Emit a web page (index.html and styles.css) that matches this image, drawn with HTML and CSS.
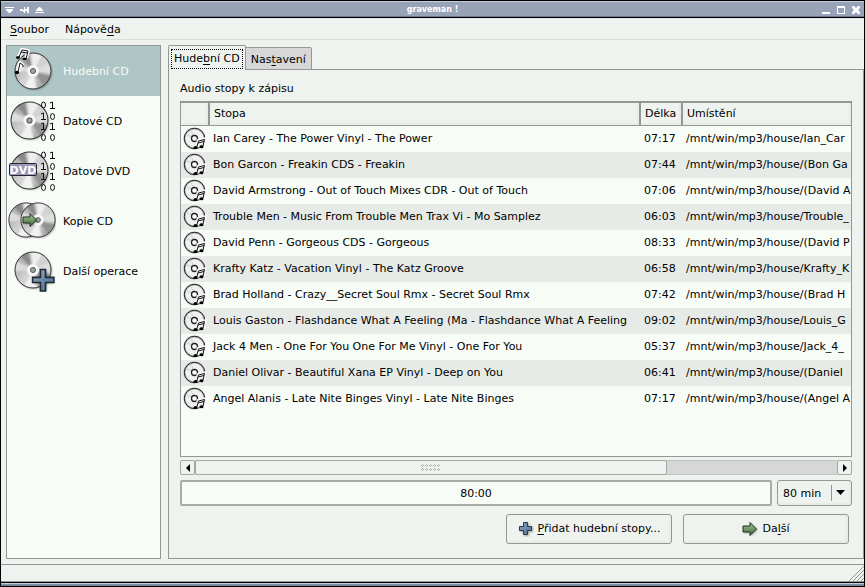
FILE: index.html
```html
<!DOCTYPE html>
<html lang="cs">
<head>
<meta charset="utf-8">
<title>graveman !</title>
<link rel="stylesheet" href="styles.css">
</head>
<body>
<svg class="defs" aria-hidden="true">
  <defs>
    <linearGradient id="silver" x1="0" y1="0" x2="1" y2="1">
      <stop offset="0" stop-color="#a9a9a9"/><stop offset=".3" stop-color="#b8b8b8"/><stop offset=".5" stop-color="#d4d4d4"/><stop offset=".75" stop-color="#b4b4b4"/><stop offset="1" stop-color="#8e8e8e"/>
    </linearGradient>
    <linearGradient id="blue" x1="0" y1="0" x2="1" y2="1"><stop offset="0" stop-color="#8aa6c2"/><stop offset="1" stop-color="#4c6b8c"/></linearGradient>
    <linearGradient id="green" x1="0" y1="0" x2="0" y2="1"><stop offset="0" stop-color="#a3c498"/><stop offset="1" stop-color="#3f6b3a"/></linearGradient>
    <filter id="soft"><feGaussianBlur stdDeviation="1"/></filter>
    <clipPath id="disc-clip"><circle cx="20" cy="20" r="18"/></clipPath>
    <symbol id="disc" viewBox="0 0 40 40">
      <circle cx="21" cy="21" r="18" fill="#000" opacity=".3" filter="url(#soft)"/>
      <circle cx="20" cy="20" r="18" fill="url(#silver)"/>
      <g clip-path="url(#disc-clip)" filter="url(#soft)">
        <path d="M20 20L-2 8V22Z" fill="#ddd"/>
        <path d="M20 20L2 0L14 -2Z" fill="#898989"/>
        <path d="M20 20L17 -2H33Z" fill="#eee"/>
        <path d="M20 20L42 8V24Z" fill="#dedede"/>
        <path d="M20 20L42 26L34 40Z" fill="#929292"/>
        <path d="M20 20L7 42H25Z" fill="#f1f1f1"/>
      </g>
      <circle cx="20" cy="20" r="18" fill="none" stroke="#333" stroke-width="1"/>
      <circle cx="20" cy="20" r="6" fill="#f7f7f7"/>
      <circle cx="20" cy="20" r="2.500" fill="#9ea6a4" stroke="#555"/>
    </symbol>
    <symbol id="bits" viewBox="0 0 16 42">
      <g fill="none" stroke="#111">
        <ellipse cx="3.500" cy="5" rx="2" ry="3"/><path d="M10 3L12.500 2V8.500M10 8.500H15"/>
        <path d="M1 14L3.500 13V19.500M1 19.500H6"/><ellipse cx="12.500" cy="16.500" rx="2" ry="3"/>
        <path d="M1 24L3.500 23V29.500M1 29.500H6M10 24L12.500 23V29.500M10 29.500H15"/>
        <ellipse cx="3.500" cy="37.500" rx="2" ry="3"/><ellipse cx="12.500" cy="37.500" rx="2" ry="3"/>
      </g>
    </symbol>
    <symbol id="plus" viewBox="0 0 24 24">
      <path d="M10 3H15V10H22V15H15V22H10V15H3V10H10Z" fill="#000" opacity=".35" filter="url(#soft)"/>
      <path d="M9 1.500H14V9H22V14H14V22H9V14H1.500V9H9Z" fill="url(#blue)" stroke="#202a35" stroke-width="1.500"/>
    </symbol>
    <symbol id="plus-small" viewBox="0 0 16 16">
      <path d="M6 2H11V6H15V11H11V15H6V11H2V6H6Z" fill="#000" opacity=".35" filter="url(#soft)"/>
      <path d="M5.500 1.500H9.500V5.500H13.500V9.500H9.500V13.500H5.500V9.500H1.500V5.500H5.500Z" fill="url(#blue)" stroke="#2c3a4a" stroke-linejoin="round"/>
    </symbol>
    <symbol id="arrow" viewBox="0 0 16 16">
      <path d="M2 6H9V3L16 9L9 15V12H2Z" fill="#000" opacity=".3" filter="url(#soft)"/>
      <path d="M1 5H8V1.500L14.500 8L8 14.500V11H1Z" fill="url(#green)" stroke="#1e301d"/>
    </symbol>
    <symbol id="track" viewBox="0 0 24 24">
      <circle cx="11.500" cy="11.500" r="10" fill="#f0f1f0" stroke="#bbb" stroke-width="2"/>
      <path d="M4 8L10 10M8 4L11 9M14 13L19 16" stroke="#dcdcdc" stroke-width="2"/>
      <circle cx="11.500" cy="11.500" r="10.200" fill="none" stroke="#222"/>
      <circle cx="11.500" cy="11.500" r="3" fill="#fff" stroke="#222" stroke-width="1.300"/>
      <path d="M14 20L15.500 14L21.500 12.500L20 19" fill="none" stroke="#f4f6f4" stroke-width="4"/>
      <path d="M13.800 20L15.500 14L21.500 12.500L20 19M15 16L21 14.500" fill="none" stroke="#111"/>
      <ellipse cx="12.500" cy="20.400" rx="1.900" ry="1.500"/><ellipse cx="18.600" cy="19.800" rx="1.900" ry="1.500"/>
    </symbol>
  </defs>
</svg>
<div class="window">
  <header class="titlebar">
    <div class="title-buttons">
      <button aria-label="Nabídka okna"><svg width="9" height="8"><path d="M0 1H9V2H0ZM1 3H8V4L5 7H4L1 4Z"/></svg></button>
      <button aria-label="Připnout"><svg width="9" height="8"><path d="M0 3H3V4H4V1H5V3H7V1H9V7H7V5H5V7H4V6H3V5H0Z"/></svg></button>
      <button aria-label="Srolovat"><svg width="9" height="8"><path d="M0 6H9V7H0ZM1 5V4L4 1H5L8 4V5Z"/></svg></button>
    </div>
    <h1>graveman !</h1>
    <div class="title-buttons right">
      <button aria-label="Minimalizovat"><svg width="8" height="8"><path d="M0 6H8V8H0Z"/></svg></button>
      <button aria-label="Maximalizovat"><svg width="8" height="8"><path fill-rule="evenodd" d="M0 0H8V8H0ZM1 2V7H7V2Z"/></svg></button>
      <button aria-label="Zavřít"><svg width="8" height="8"><path d="M0 0H2L4 2L6 0H8V2L6 4L8 6V8H6L4 6L2 8H0V6L2 4L0 2Z"/></svg></button>
    </div>
  </header>
  <nav class="menubar"><button><u>S</u>oubor</button><button>Nápově<u>d</u>a</button></nav>
  <main class="body">
    <nav class="sidebar">
      <button class="task selected">
        <svg width="48" height="48"><use href="#disc" x="5" y="4" width="40" height="40"/>
          <g fill="none" stroke="#fff" stroke-width="4" stroke-linejoin="round"><path d="M11 10L14 3L20 4L18 11M10 25L12 16L15 19"/><path d="M9 10H12M15 12H18M8 25H11"/></g>
          <g fill="none" stroke="#111"><path d="M11 10L14 3L20 4L18 12M13 5L19.500 6M10 25L12 16L15 18V20"/></g>
          <ellipse cx="10" cy="10.500" rx="2" ry="1.500"/><ellipse cx="16.500" cy="12" rx="2" ry="1.500"/><ellipse cx="9" cy="25.500" rx="2.200" ry="1.700"/>
        </svg><span>Hudební CD</span></button>
      <button class="task"><svg width="48" height="48"><use href="#disc" x="1" y="3" width="41" height="41"/><use href="#bits" x="32" y="3" width="16" height="42"/></svg><span>Datové CD</span></button>
      <button class="task"><svg width="48" height="48"><use href="#disc" x="1" y="3" width="41" height="41"/><use href="#bits" x="32" y="3" width="16" height="42"/><rect x="1.500" y="16.500" width="27" height="12" rx="1" fill="#9c98b8" stroke="#223"/><text class="disc-label" x="15" y="27" text-anchor="middle">DVD</text></svg><span>Datové DVD</span></button>
      <button class="task"><svg width="48" height="48"><use href="#disc" x="-1" y="4" width="38" height="38"/><use href="#disc" x="11" y="4" width="38" height="38"/><use href="#arrow" x="14" y="15" width="16" height="16"/></svg><span>Kopie CD</span></button>
      <button class="task"><svg width="48" height="48"><use href="#disc" x="5" y="3" width="40" height="40"/><use href="#plus" x="23" y="21" width="25" height="25"/></svg><span>Další operace</span></button>
    </nav>
    <section class="notebook">
      <div class="tabs" role="tablist">
        <button class="tab active" role="tab" aria-selected="true"><span>Hude<u>b</u>ní CD</span></button>
        <button class="tab" role="tab" aria-selected="false"><span>Nas<u>t</u>avení</span></button>
      </div>
      <div class="page" role="tabpanel">
        <h2>Audio stopy k zápisu</h2>
        <div class="list">
          <table>
            <colgroup><col class="c-icon"><col class="c-name"><col class="c-time"><col></colgroup>
            <thead><tr><th></th><th>Stopa</th><th>Délka</th><th>Umístění</th></tr></thead>
            <tbody>
              <tr><td><svg width="24" height="24"><use href="#track"/></svg></td><td>Ian Carey - The Power Vinyl - The Power</td><td>07:17</td><td>/mnt/win/mp3/house/Ian_Car</td></tr>
              <tr><td><svg width="24" height="24"><use href="#track"/></svg></td><td>Bon Garcon - Freakin CDS - Freakin</td><td>07:44</td><td>/mnt/win/mp3/house/(Bon Ga</td></tr>
              <tr><td><svg width="24" height="24"><use href="#track"/></svg></td><td>David Armstrong - Out of Touch Mixes CDR - Out of Touch</td><td>07:06</td><td>/mnt/win/mp3/house/(David A</td></tr>
              <tr><td><svg width="24" height="24"><use href="#track"/></svg></td><td>Trouble Men - Music From Trouble Men Trax Vi - Mo Samplez</td><td>06:03</td><td>/mnt/win/mp3/house/Trouble_</td></tr>
              <tr><td><svg width="24" height="24"><use href="#track"/></svg></td><td>David Penn - Gorgeous CDS - Gorgeous</td><td>08:33</td><td>/mnt/win/mp3/house/(David P</td></tr>
              <tr><td><svg width="24" height="24"><use href="#track"/></svg></td><td>Krafty Katz - Vacation Vinyl - The Katz Groove</td><td>06:58</td><td>/mnt/win/mp3/house/Krafty_K</td></tr>
              <tr><td><svg width="24" height="24"><use href="#track"/></svg></td><td>Brad Holland - Crazy__Secret Soul Rmx - Secret Soul Rmx</td><td>07:42</td><td>/mnt/win/mp3/house/(Brad H</td></tr>
              <tr><td><svg width="24" height="24"><use href="#track"/></svg></td><td>Louis Gaston - Flashdance What A Feeling (Ma - Flashdance What A Feeling</td><td>09:02</td><td>/mnt/win/mp3/house/Louis_G</td></tr>
              <tr><td><svg width="24" height="24"><use href="#track"/></svg></td><td>Jack 4 Men - One For You One For Me Vinyl - One For You</td><td>05:37</td><td>/mnt/win/mp3/house/Jack_4_</td></tr>
              <tr><td><svg width="24" height="24"><use href="#track"/></svg></td><td>Daniel Olivar - Beautiful Xana EP Vinyl - Deep on You</td><td>06:41</td><td>/mnt/win/mp3/house/(Daniel</td></tr>
              <tr><td><svg width="24" height="24"><use href="#track"/></svg></td><td>Angel Alanis - Late Nite Binges Vinyl - Late Nite Binges</td><td>07:17</td><td>/mnt/win/mp3/house/(Angel A</td></tr>
            </tbody>
          </table>
        </div>
        <div class="scrollbar">
          <button class="step" aria-label="Doleva"><svg width="4" height="8"><path d="M4 0V8L0 4Z"/></svg></button>
          <div class="trough"><div class="thumb"><svg width="19" height="7"><path d="M0 1.500H19M0 5.500H19" stroke="#a5aaa5" stroke-dasharray="1 1 1 1"/><path d="M1 0.500H19M1 2.500H19M1 4.500H19M1 6.500H19" stroke="#b9beb9" stroke-dasharray="1 3"/></svg></div></div>
          <button class="step" aria-label="Doprava"><svg width="4" height="8"><path d="M0 0V8L4 4Z"/></svg></button>
        </div>
        <div class="capacity">
          <div class="meter" role="progressbar" aria-label="Délka" aria-valuenow="0">80:00</div>
          <div class="combo"><select aria-label="Kapacita disku"><option>80 min</option></select><svg width="9" height="5" aria-hidden="true"><path d="M0 0H9L4.500 5Z"/></svg></div>
        </div>
        <div class="actions">
          <button class="action"><svg width="16" height="16"><use href="#plus-small"/></svg><span><u>P</u>řidat hudební stopy...</span></button>
          <button class="action"><svg width="16" height="16"><use href="#arrow"/></svg><span>Da<u>l</u>ší</span></button>
        </div>
      </div>
    </section>
  </main>
  <footer class="status"><svg width="15" height="15"><path d="M0 15L15 0M4 15L15 4M8 15L15 8M12 15L15 12" stroke="#929792"/></svg></footer>
  <div class="frame-bottom"></div>
</div>
</body>
</html>
```
FILE: styles.css
```css
* { box-sizing: border-box; }
body { margin: 0; background: #000; }
body, button, select { font: 11px/14px "DejaVu Sans", sans-serif; color: #000; }
button { margin: 0; padding: 0; border: 0; background: none; }
svg { display: block; flex: none; }
h1, h2 { margin: 0; font-size: inherit; }
u { text-decoration: underline; text-underline-offset: 2px; }
.defs { position: absolute; width: 0; height: 0; }

.window { display: flex; flex-direction: column; height: 100vh; border: 1px solid #000; border-bottom: 0; background: #eff3ef; }

.titlebar { display: flex; align-items: center; height: 17px; background: #98a3b8; border-top: 1px solid #c5ccda; border-bottom: 1px solid #000; box-shadow: inset 0 -1px #6c7892; color: #fff; }
.titlebar h1 { flex: 1; text-align: center; font: bold 8px/14px "DejaVu Sans", sans-serif; }
.title-buttons { display: flex; gap: 6px; width: 44px; padding-left: 4px; fill: #fff; }
.title-buttons.right { gap: 7px; justify-content: flex-end; padding: 0 4px 0 0; }

.menubar { display: flex; gap: 16px; height: 22px; padding: 2px 9px 0; border-top: 1px solid #dfe3df; border-bottom: 1px solid #dbdfdb; }

.body { display: flex; flex: 1; gap: 7px; min-height: 0; padding: 5px 0 5px 5px; }
.sidebar { flex: none; width: 155px; border: 1px solid #949894; background: #f7fcf7; }
.task { display: flex; align-items: center; gap: 7px; width: 100%; height: 50px; padding-left: 1px; text-align: left; }
.task span { padding-top: 2px; }
.task.selected { background: #afc6c6; color: #f7fcf7; }
.disc-label { font: bold 11px "DejaVu Sans", sans-serif; fill: #fff; }

.notebook { display: flex; flex: 1; flex-direction: column; min-width: 0; }
.tabs { display: flex; align-items: flex-end; height: 25px; margin-bottom: -1px; }
.tab { height: 23px; padding: 2px 5px 0; border: 1px solid #949894; border-left: 0; background: #d7d7d7; border-radius: 0 2px 0 0; }
.tab.active { z-index: 1; height: 25px; padding: 1px 2px 0; border-left: 1px solid #949894; border-bottom: 0; border-radius: 2px 2px 0 0; background: #eff3ef; }
.tab.active span { display: block; padding: 2px; border: 1px dotted #000; }
.page { display: flex; flex: 1; flex-direction: column; min-height: 0; padding: 12px 11px 14px; border: 1px solid #949894; }
.page h2 { margin-bottom: 5px; font-weight: normal; }

.list { flex: 1; min-height: 0; overflow: hidden; border: 1px solid #949894; background: #f7fcf7; }
table { width: 100%; border-collapse: separate; border-spacing: 0; table-layout: fixed; }
.c-icon { width: 29px; }
.c-name { width: 431px; }
.c-time { width: 42px; }
th { height: 24px; padding: 0 4px; border-right: 2px solid #949894; border-top: 1px solid #949894; border-bottom: 1px solid #949894; background: #eff3ef; box-shadow: inset -2px -2px #e8ebe8; font-weight: normal; text-align: left; white-space: nowrap; }
th:last-child { border-right: 0; }
td { height: 26px; padding: 0 3px; overflow: hidden; white-space: nowrap; }
td:first-child { padding: 0 2px; }
tbody tr:nth-child(even) { background: #e7ebe7; }

.scrollbar { display: flex; height: 15px; margin-top: 3px; }
.step { display: flex; align-items: center; justify-content: center; width: 15px; border: 1px solid #a2a7a2; border-radius: 2px; }
.trough { flex: 1; border: 1px solid #bfc3bf; border-width: 1px 0; background: #d7d7d7; }
.thumb { display: flex; align-items: center; justify-content: center; width: 73.5%; height: 15px; margin-top: -1px; border: 1px solid #a2a7a2; border-radius: 2px; background: #eff3ef; }

.capacity { display: flex; gap: 5px; height: 26px; margin-top: 5px; }
.meter { flex: 1; border: 2px solid #a8aca8; border-radius: 2px; background: #f7fcf7; line-height: 23px; text-align: center; }
.combo { position: relative; width: 75px; }
.combo select { width: 100%; height: 100%; padding: 1px 5px 0; appearance: none; border: 1px solid #949894; border-radius: 3px; background: linear-gradient(#949894, #949894) 53px 4px / 1px 16px no-repeat #eff3ef; box-shadow: inset -2px -2px #e8ebe8; }
.combo svg { position: absolute; top: 10px; right: 7px; pointer-events: none; }

.actions { display: flex; justify-content: flex-end; gap: 11px; margin: 8px 3px 0 0; }
.action { display: flex; align-items: center; justify-content: center; gap: 4px; width: 166px; height: 30px; border: 1px solid #949894; border-radius: 3px; box-shadow: inset -2px -2px #e8ebe8; }

.status { display: flex; align-items: flex-end; justify-content: flex-end; height: 18px; border: 1px solid #949894; border-width: 1px 0; }
.frame-bottom { height: 5px; border-top: 1px solid #000; border-bottom: 1px solid #000; background: linear-gradient(#c5ccda 1px, #8796ae 1px, #6c7892); }
```
